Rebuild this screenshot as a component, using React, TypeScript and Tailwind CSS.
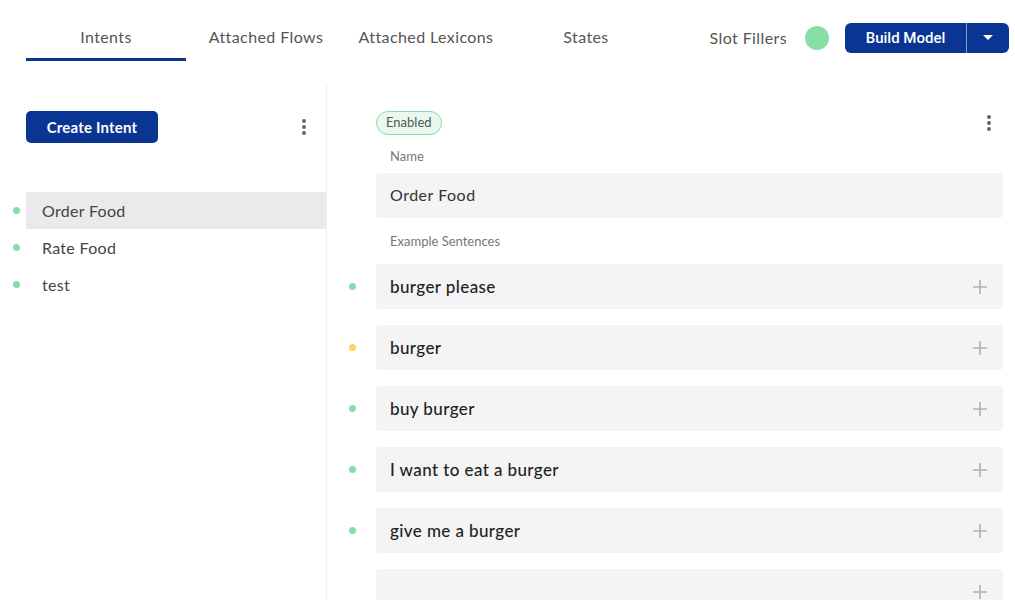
const tabs = ["Intents", "Attached Flows", "Attached Lexicons", "States"];

const intents = [
  { name: "Order Food", active: true },
  { name: "Rate Food", active: false },
  { name: "test", active: false },
];

const sentences = [
  { text: "burger please", status: "ok" },
  { text: "burger", status: "warn" },
  { text: "buy burger", status: "ok" },
  { text: "I want to eat a burger", status: "ok" },
  { text: "give me a burger", status: "ok" },
  { text: "", status: "none" },
];

function Kebab() {
  return (
    <div className="flex flex-col items-center gap-[2px] w-4">
      <span className="w-[4px] h-[4px] rounded-full bg-[#666]" />
      <span className="w-[4px] h-[4px] rounded-full bg-[#666]" />
      <span className="w-[4px] h-[4px] rounded-full bg-[#666]" />
    </div>
  );
}

function PlusIcon() {
  return (
    <svg width="16" height="16" viewBox="0 0 16 16" className="shrink-0">
      <path d="M8 1v14M1 8h14" stroke="#b0b0b0" strokeWidth="1.6" />
    </svg>
  );
}

export default function App() {
  return (
    <div className="w-[1015px] h-[600px] overflow-hidden bg-white font-['Lato',sans-serif] text-[#444]">
      {/* top bar */}
      <header className="h-[85px] flex items-start pt-[15px] pl-[26px] pr-[6px]">
        <nav className="flex">
          {tabs.map((t, i) => (
            <div
              key={t}
              className={
                "w-[160px] h-[46px] flex items-start justify-center pt-[10px] text-[16px] tracking-[0.4px] text-[#555] " +
                (i === 0 ? "border-b-[3px] border-[#0b3592]" : "")
              }
            >
              {t}
            </div>
          ))}
        </nav>
        <div className="ml-auto flex items-center h-[45px]">
          <span className="text-[16px] tracking-[0.4px] text-[#555]">Slot Fillers</span>
          <span className="ml-[18px] w-6 h-6 rounded-full bg-[#86dea5]" />
          <div className="ml-4 flex h-[30px] rounded-[6px] bg-[#0b3592] text-white font-['Roboto',sans-serif] overflow-hidden mt-[1px]">
            <button type="button" className="w-[121px] text-[15px] font-medium flex items-center justify-center">
              Build Model
            </button>
            <span className="w-px bg-[#8f9bb8]" />
            <button type="button" className="w-[42px] flex items-center justify-center">
              <svg width="10" height="6" viewBox="0 0 10 6">
                <path d="M0 0h10L5 5z" fill="#fff" />
              </svg>
            </button>
          </div>
        </div>
      </header>

      <div className="flex h-[515px]">
        {/* left panel */}
        <aside className="w-[327px] shrink-0 border-r border-[#eeeeee] pt-[26px]">
          <div className="flex items-center justify-between pl-[26px] pr-[14px]">
            <button
              type="button"
              className="w-[132px] h-[32px] rounded-[5px] bg-[#0b3592] text-white text-[15px] font-bold tracking-[0.2px]"
            >
              Create Intent
            </button>
            <Kebab />
          </div>
          <ul className="mt-[49px]">
            {intents.map((it) => (
              <li key={it.name} className="flex items-center h-[37px]">
                <span className="w-[26px] flex justify-start pl-[13px]">
                  <span className="w-[7px] h-[7px] rounded-full bg-[#86dea5]" />
                </span>
                <span
                  className={
                    "flex-1 h-full flex items-center pl-4 text-[16px] tracking-[0.3px] text-[#444] " +
                    (it.active ? "bg-[#eaeaea]" : "")
                  }
                >
                  {it.name}
                </span>
              </li>
            ))}
          </ul>
        </aside>

        {/* right panel */}
        <main className="flex-1 pt-[26px] pr-[12px]">
          <div className="pl-[49px] flex items-center justify-between pr-[6px]">
            <span className="h-6 px-[9px] flex items-center rounded-full border border-[#86dea5] bg-[#e8f8ee] text-[13px] text-[#555]">
              Enabled
            </span>
            <Kebab />
          </div>
          <div className="pl-[49px]">
            <div className="mt-[12px] pl-[14px] text-[13px] text-[#777]">Name</div>
            <div className="mt-[6px] h-[45px] rounded-[4px] bg-[#f4f4f4] flex items-center px-[14px] text-[16px] tracking-[0.5px] text-[#333]">
              Order Food
            </div>
            <div className="mt-[14px] pl-[14px] text-[13px] text-[#777]">Example Sentences</div>
          </div>
          <div className="mt-[13px] flex flex-col gap-[16px]">
            {sentences.map((s, i) => (
              <div key={i} className="flex items-center">
                <span className="w-[49px] flex justify-center pl-[2px]">
                  {s.status !== "none" && (
                    <span
                      className={
                        "w-[7px] h-[7px] rounded-full " +
                        (s.status === "warn" ? "bg-[#ffd45c]" : "bg-[#86dea5]")
                      }
                    />
                  )}
                </span>
                <div className="flex-1 h-[45px] rounded-[4px] bg-[#f4f4f4] flex items-center justify-between pl-[14px] pr-[15px]">
                  <span className="text-[17px] font-medium tracking-[0.4px] text-[#222]">{s.text}</span>
                  <PlusIcon />
                </div>
              </div>
            ))}
          </div>
        </main>
      </div>
    </div>
  );
}
